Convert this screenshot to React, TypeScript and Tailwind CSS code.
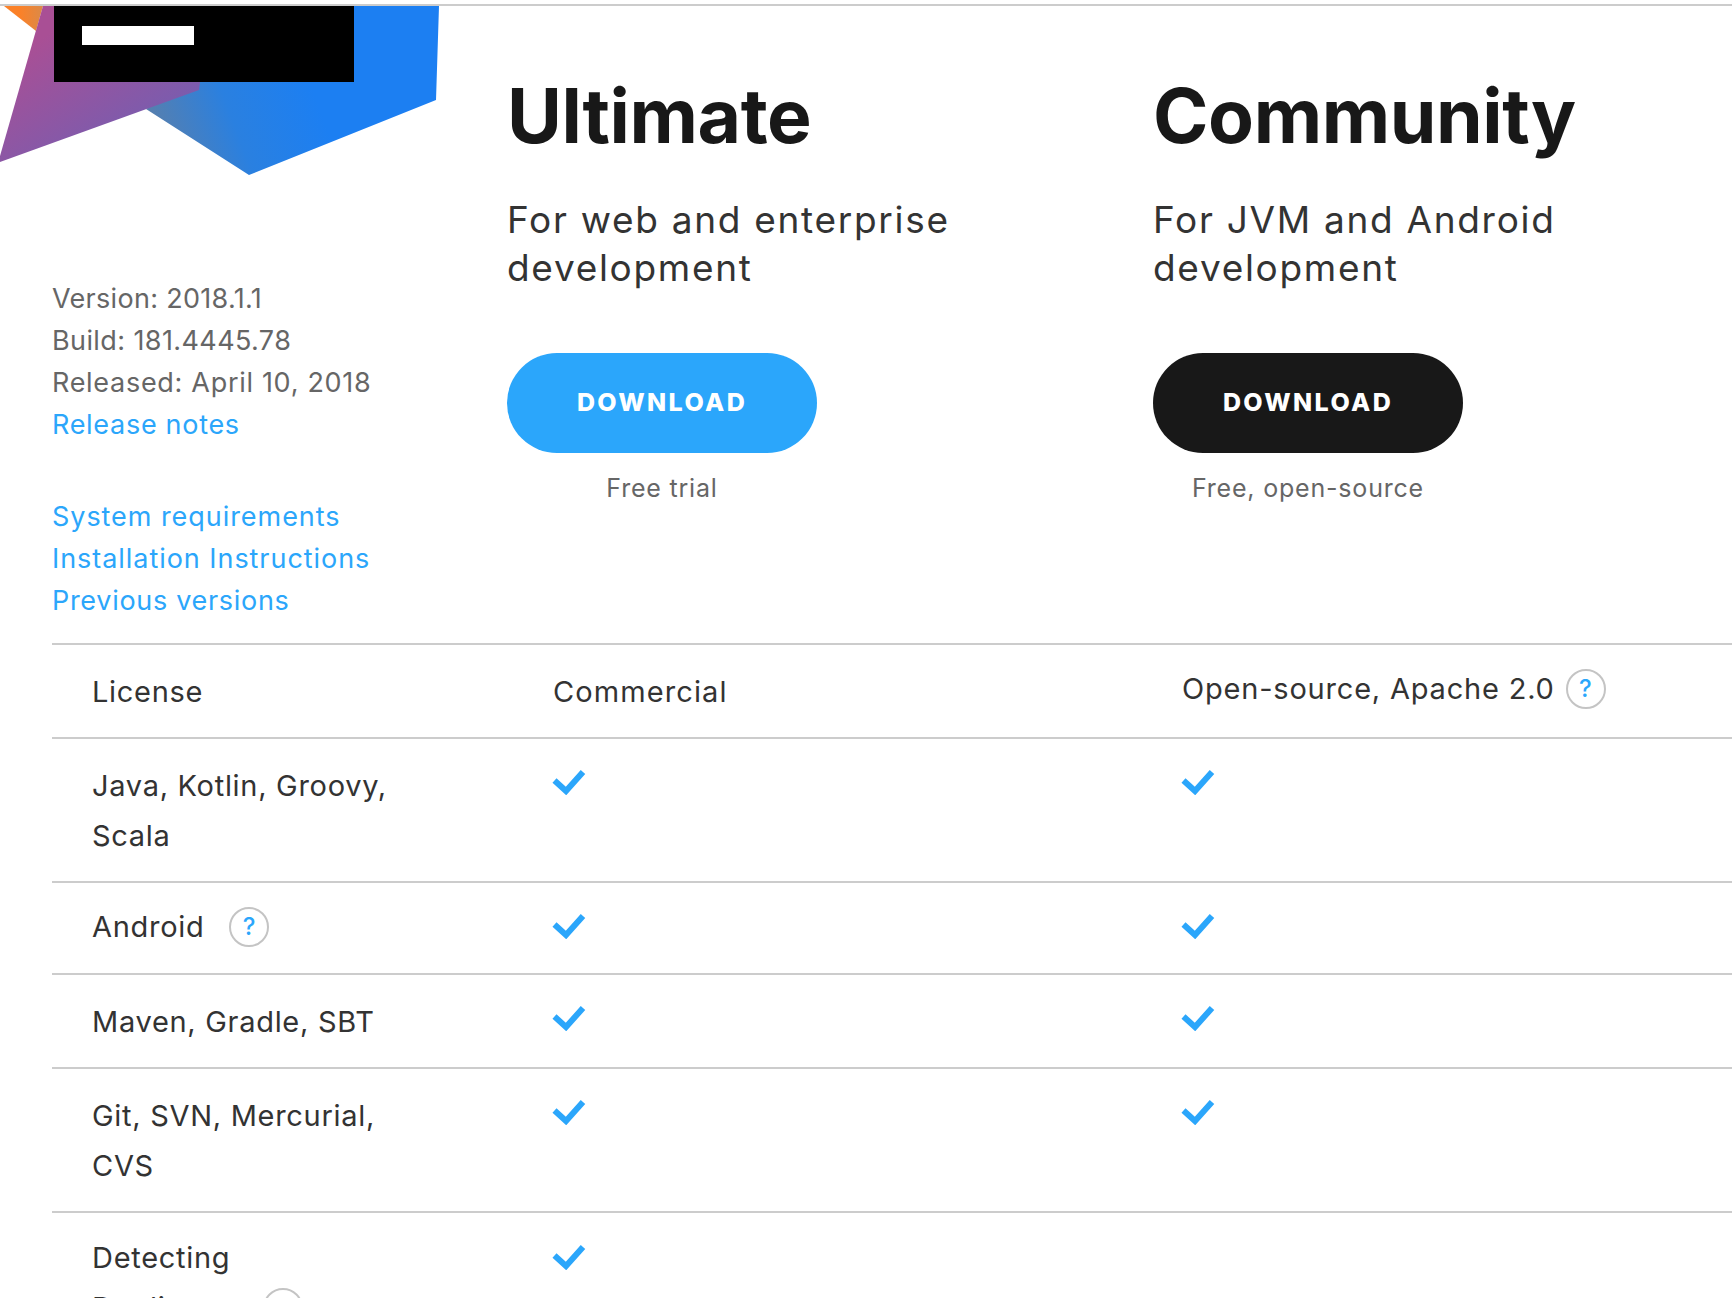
const FONT = "font-['Inter','Liberation_Sans',sans-serif]";

function Logo() {
  return (
    <svg width="440" height="170" viewBox="0 0 440 170" className="block">
      <defs>
        <linearGradient id="blue" x1="140" y1="110" x2="300" y2="50" gradientUnits="userSpaceOnUse">
          <stop offset="0" stopColor="#5c7fa8" />
          <stop offset="0.5" stopColor="#2a80e0" />
          <stop offset="1" stopColor="#1c7ff2" />
        </linearGradient>
        <linearGradient id="purple" x1="60" y1="20" x2="130" y2="130" gradientUnits="userSpaceOnUse">
          <stop offset="0" stopColor="#a94f95" />
          <stop offset="1" stopColor="#7a5cae" />
        </linearGradient>
        <linearGradient id="orange" x1="20" y1="10" x2="44" y2="10" gradientUnits="userSpaceOnUse">
          <stop offset="0" stopColor="#fb8128" />
          <stop offset="1" stopColor="#d98a4a" />
        </linearGradient>
      </defs>
      <polygon points="146,103 200,70 210,0 439,0 436,94 249,169" fill="url(#blue)" />
      <polygon points="4,0 43,0 36,25" fill="url(#orange)" />
      <polygon points="43,0 210,0 199,84 0,156 0,150" fill="url(#purple)" />
      <rect x="54" y="0" width="300" height="76" fill="#000" />
      <rect x="82" y="20" width="112" height="19" fill="#fff" />
    </svg>
  );
}

function Check() {
  return (
    <svg width="34" height="26" viewBox="0 0 34 26" className="-ml-px block">
      <path d="M2.5 11.5 L14 22 L31 3" fill="none" stroke="#2ba6fb" strokeWidth="6" />
    </svg>
  );
}

function Help() {
  return (
    <span className="inline-flex h-10 w-10 shrink-0 items-center justify-center rounded-full border-2 border-[#c4c4c4] text-[24px] font-medium text-[#2ba6fb]">
      ?
    </span>
  );
}

function Plan(props: { name: string; desc: string; button: string; note: string }) {
  return (
    <div>
      <h2 className="mt-[65px] text-[75px] leading-[90px] font-bold tracking-[-0.4px] text-[#181818]">{props.name}</h2>
      <p className="mt-[35px] w-[450px] text-[37px] leading-[48px] tracking-[1.7px] text-[#333]">{props.desc}</p>
      <div className="mt-[61px] w-[310px]">
        <button className={`h-[100px] w-[310px] rounded-full text-[25px] font-extrabold tracking-[2.4px] text-white ${props.button}`}>
          DOWNLOAD
        </button>
        <div className="mt-[19px] text-center text-[25px] leading-[32px] tracking-[0.8px] text-[#666]">{props.note}</div>
      </div>
    </div>
  );
}

const rows = [
  { label: 'Java, Kotlin, Groovy,', label2: 'Scala', h: 'h-[144px]', pt: 'pt-[22px]', checkPt: 'pt-[8px]', third: true },
  { label: 'Android', help: true, h: 'h-[92px]', pt: 'pt-[19px]', checkPt: 'pt-[11px]', third: true },
  { label: 'Maven, Gradle, SBT', h: 'h-[94px]', pt: 'pt-[22px]', checkPt: 'pt-[8px]', third: true },
  { label: 'Git, SVN, Mercurial,', label2: 'CVS', h: 'h-[144px]', pt: 'pt-[22px]', checkPt: 'pt-[8px]', third: true },
  { label: 'Detecting', label2: 'Duplicates', help2: true, h: 'h-[144px]', pt: 'pt-[20px]', checkPt: 'pt-[11px]', third: false },
];

export default function App() {
  return (
    <div className={`h-[1298px] w-[1732px] overflow-hidden bg-white ${FONT}`}>
      <div className="h-[6px] bg-white">
        <div className="h-[2px] translate-y-[4px] bg-[#ccc]" />
      </div>

      <div className="grid h-[637px] grid-cols-[507px_646px_579px]">
        <div>
          <Logo />
          <div className="mt-[102px] pl-[52px] text-[27px] leading-[42px] tracking-[0.7px] text-[#666]">
            <div className="tracking-[0.3px]">Version: 2018.1.1</div>
            <div className="tracking-[0.4px]">Build: 181.4445.78</div>
            <div>Released: April 10, 2018</div>
            <div className="text-[#2ba6fb]">Release notes</div>
            <div className="mt-[50px] text-[#2ba6fb]">
              <div className="tracking-[0.95px]">System requirements</div>
              <div className="tracking-[0.95px]">Installation Instructions</div>
              <div>Previous versions</div>
            </div>
          </div>
        </div>
        <Plan name="Ultimate" desc="For web and enterprise development" button="bg-[#2ba6fb]" note="Free trial" />
        <Plan name="Community" desc="For JVM and Android development" button="bg-[#181818]" note="Free, open-source" />
      </div>

      <div className="ml-[52px] text-[29px] leading-[50px] tracking-[0.7px] text-[#333]">
        <div className="grid h-[94px] grid-cols-[461px_629px_1fr] items-center border-t-2 border-[#ccc] pt-[2px] pl-10">
          <div>License</div>
          <div className="tracking-[1.1px]">Commercial</div>
          <div className="flex -translate-y-[3px] items-center gap-[11px] tracking-[0.8px]">
            Open-source, Apache 2.0 <Help />
          </div>
        </div>
        {rows.map((r) => (
          <div key={r.label} className={`grid grid-cols-[461px_629px_1fr] border-t-2 border-[#ccc] pl-10 ${r.h} ${r.pt}`}>
            <div>
              <div className="flex items-center gap-[25px]">
                {r.label}
                {r.help && <Help />}
              </div>
              {r.label2 && (
                <div className="flex items-center gap-[20px]">
                  {r.label2}
                  {r.help2 && <Help />}
                </div>
              )}
            </div>
            <div className={r.checkPt}>
              <Check />
            </div>
            <div className={r.checkPt}>{r.third && <Check />}</div>
          </div>
        ))}
      </div>
    </div>
  );
}
